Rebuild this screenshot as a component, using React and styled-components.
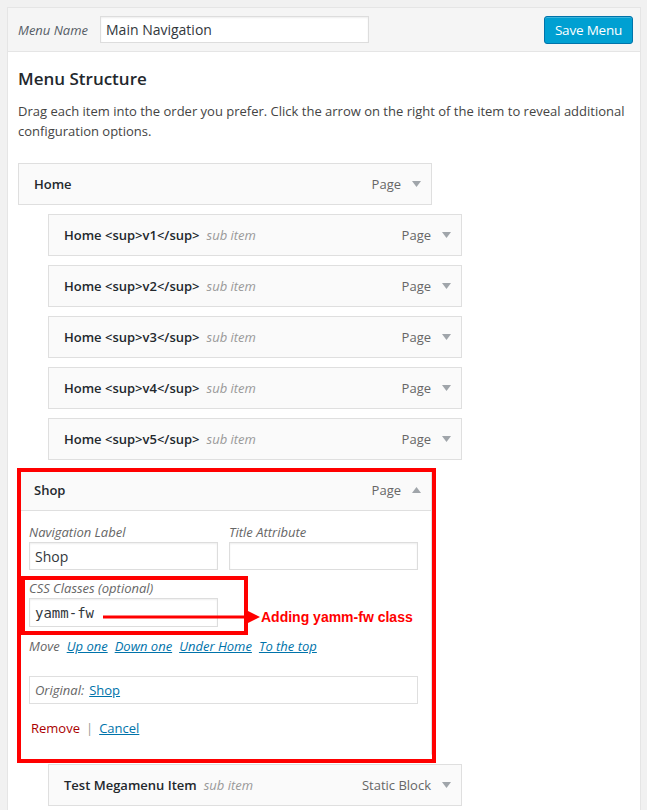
import React from 'react';
import styled, { createGlobalStyle } from 'styled-components';

const GlobalStyle = createGlobalStyle`
  html, body {
    margin: 0;
    padding: 0;
    background: #f1f1f1;
  }
  body {
    font-family: "Open Sans", "Noto Sans", sans-serif;
    font-size: 13px;
    color: #444;
  }
  * { box-sizing: border-box; }
`;

const Panel = styled.div`
  margin: 7px 6px 0 7px;
  background: #fff;
  border: 1px solid #e5e5e5;
  border-bottom: none;
  min-height: 803px;
`;

const Header = styled.div`
  display: flex;
  align-items: center;
  height: 44px;
  padding: 0 7px 0 10px;
  background: #f5f5f5;
  border-bottom: 1px solid #e5e5e5;
`;

const NameLabel = styled.label`
  font-style: italic;
  color: #555d66;
  margin-right: 12px;
`;

const NameInput = styled.input`
  width: 269px;
  height: 27px;
  border: 1px solid #ddd;
  box-shadow: inset 0 1px 2px rgba(0, 0, 0, 0.07);
  padding: 0 5px;
  font-family: "Open Sans", sans-serif;
  font-size: 14px;
  color: #32373c;
  background: #fff;
  outline: none;
`;

const SaveButton = styled.button`
  margin-left: auto;
  width: 89px;
  height: 28px;
  padding: 0;
  border: 1px solid #0073aa;
  border-radius: 3px;
  background: #00a0d2;
  box-shadow: inset 0 1px 0 rgba(120, 200, 230, 0.5);
  color: #fff;
  font-family: "Open Sans", sans-serif;
  font-size: 13.5px;
  letter-spacing: -0.2px;
`;

const Body = styled.div`
  padding: 16px 10px 0 10px;
`;

const Title = styled.h3`
  margin: 0;
  font-size: 17px;
  line-height: 22px;
  font-weight: 600;
  color: #23282d;
`;

const Intro = styled.p`
  margin: 11px 0 22px;
  line-height: 20px;
  color: #444;
`;

const List = styled.div`
  display: flex;
  flex-direction: column;
  gap: 9px;
`;

const Item = styled.div`
  position: relative;
  width: 414px;
  margin-left: ${p => (p.$depth || 0) * 30}px;
  border: 1px solid #dfdfdf;
  border-bottom-color: ${p => (p.$open ? 'transparent' : '#dfdfdf')};
  background: #fff;
`;

const Bar = styled.div`
  display: flex;
  align-items: center;
  height: ${p => (p.$open ? 41 : 40)}px;
  padding: 0 10px 0 15px;
  background: #fafafa;
  border-bottom: ${p => (p.$open ? '1px solid #dfdfdf' : 'none')};
`;

const ItemTitle = styled.span`
  font-weight: 600;
  color: #23282d;
`;

const SubLabel = styled.span`
  margin-left: 7px;
  font-style: italic;
  color: #999;
`;

const Controls = styled.span`
  margin-left: auto;
  display: flex;
  align-items: center;
  gap: 11px;
  color: #666;
`;

const Settings = styled.div`
  padding: 12px 13px 16px 10px;
`;

const Row = styled.div`
  display: flex;
  gap: 11px;
`;

const Field = styled.div`
  position: relative;
  width: 189px;
  margin-top: ${p => p.$gap || 0}px;
`;

const FieldLabel = styled.div`
  font-style: italic;
  color: #666;
  line-height: 19px;
`;

const TextInput = styled.input`
  display: block;
  width: 100%;
  height: ${p => (p.$mono ? 29 : 28)}px;
  border: 1px solid #ddd;
  box-shadow: inset 0 1px 2px rgba(0, 0, 0, 0.07);
  padding: 0 5px;
  font-family: ${p => (p.$mono ? '"DejaVu Sans Mono", "Liberation Mono", monospace' : '"Open Sans", sans-serif')};
  font-size: 14px;
  color: #32373c;
  background: #fff;
  outline: none;
`;

const MoveRow = styled.div`
  display: flex;
  gap: 7px;
  margin-top: 9px;
  line-height: 20px;
  font-style: italic;
  color: #666;
`;

const Link = styled.a`
  color: #0073aa;
  text-decoration: underline;
  font-style: ${p => (p.$italic ? 'italic' : 'normal')};
`;

const Original = styled.div`
  display: flex;
  align-items: center;
  gap: 5px;
  margin-top: 20px;
  height: 28px;
  padding: 0 5px;
  border: 1px solid #dfdfdf;
`;

const OriginalLabel = styled.span`
  font-style: italic;
  color: #666;
`;

const Actions = styled.div`
  display: flex;
  align-items: center;
  margin-top: 14px;
  padding-left: 2px;
  line-height: 20px;
`;

const RemoveLink = styled.a`
  color: #a00;
`;

const Sep = styled.span`
  margin: 0 6px 0 6px;
  color: #999;
`;

const RedFrame = styled.div`
  position: absolute;
  top: ${p => p.$t}px;
  left: ${p => p.$l}px;
  right: ${p => p.$r}px;
  bottom: ${p => p.$b}px;
  border: 4px solid #ff0000;
  pointer-events: none;
`;

const Callout = styled.div`
  position: absolute;
  left: 74px;
  top: 30px;
  display: flex;
  align-items: center;
  white-space: nowrap;
`;

const CalloutText = styled.span`
  margin-left: 1px;
  font-family: "Liberation Sans", Arial, sans-serif;
  font-weight: 700;
  font-size: 14px;
  color: #ff0000;
`;

const Caret = ({ up }) => (
  <svg width="9" height="6" viewBox="0 0 9 6">
    <polygon points={up ? '0,6 9,6 4.5,0' : '0,0 9,0 4.5,6'} fill="#a0a5aa" />
  </svg>
);

const MenuItem = ({ title, sub, type = 'Page', depth }) => (
  <Item $depth={depth}>
    <Bar>
      <ItemTitle>{title}</ItemTitle>
      {sub && <SubLabel>sub item</SubLabel>}
      <Controls>
        {type}
        <Caret />
      </Controls>
    </Bar>
  </Item>
);

export default function App() {
  return (
    <>
      <GlobalStyle />
      <Panel>
        <Header>
          <NameLabel>Menu Name</NameLabel>
          <NameInput readOnly value="Main Navigation" />
          <SaveButton>Save Menu</SaveButton>
        </Header>
        <Body>
          <Title>Menu Structure</Title>
          <Intro>
            Drag each item into the order you prefer. Click the arrow on the right of the item to reveal additional
            configuration options.
          </Intro>
          <List>
            <MenuItem title="Home" />
            {[1, 2, 3, 4, 5].map(n => (
              <MenuItem key={n} title={`Home <sup>v${n}</sup>`} sub depth={1} />
            ))}
            <Item $open>
              <Bar $open>
                <ItemTitle>Shop</ItemTitle>
                <Controls>
                  Page
                  <Caret up />
                </Controls>
              </Bar>
              <Settings>
                <Row>
                  <Field>
                    <FieldLabel>Navigation Label</FieldLabel>
                    <TextInput readOnly value="Shop" />
                  </Field>
                  <Field>
                    <FieldLabel>Title Attribute</FieldLabel>
                    <TextInput readOnly value="" />
                  </Field>
                </Row>
                <Field $gap={9}>
                  <FieldLabel>CSS Classes (optional)</FieldLabel>
                  <TextInput $mono readOnly value="yamm-fw" />
                  <RedFrame $t={-3} $l={-8} $r={-30} $b={-8} />
                  <Callout>
                    <svg width="157" height="12" viewBox="0 0 157 12">
                      <line x1="0" y1="6" x2="147" y2="6" stroke="#ff0000" strokeWidth="3" />
                      <polygon points="145,0 157,6 145,12" fill="#ff0000" />
                    </svg>
                    <CalloutText>Adding yamm-fw class</CalloutText>
                  </Callout>
                </Field>
                <MoveRow>
                  Move
                  <Link $italic href="#">Up one</Link>
                  <Link $italic href="#">Down one</Link>
                  <Link $italic href="#">Under Home</Link>
                  <Link $italic href="#">To the top</Link>
                </MoveRow>
                <Original>
                  <OriginalLabel>Original:</OriginalLabel>
                  <Link href="#">Shop</Link>
                </Original>
                <Actions>
                  <RemoveLink>Remove</RemoveLink>
                  <Sep>|</Sep>
                  <Link href="#">Cancel</Link>
                </Actions>
              </Settings>
              <RedFrame $t={-2} $l={-2} $r={-5} $b={-9} />
            </Item>
            <MenuItem title="Test Megamenu Item" sub type="Static Block" depth={1} />
          </List>
        </Body>
      </Panel>
    </>
  );
}
